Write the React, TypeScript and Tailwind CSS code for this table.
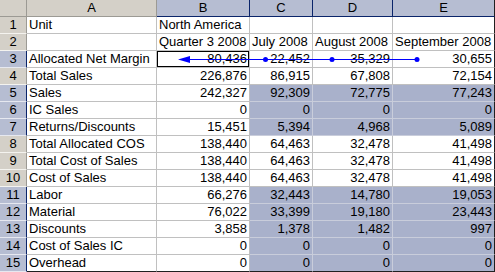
import React from "react";

type Row = { a: string; v: string[]; sel: boolean; text?: boolean };

const rows: Row[] = [
  { a: "Unit", v: ["North America", "", "", ""], sel: false, text: true },
  { a: "", v: ["Quarter 3 2008", "July 2008", "August 2008", "September 2008"], sel: false, text: true },
  { a: "Allocated Net Margin", v: ["80,436", "22,452", "35,329", "30,655"], sel: false },
  { a: "Total Sales", v: ["226,876", "86,915", "67,808", "72,154"], sel: false },
  { a: "Sales", v: ["242,327", "92,309", "72,775", "77,243"], sel: true },
  { a: "IC Sales", v: ["0", "0", "0", "0"], sel: true },
  { a: "Returns/Discounts", v: ["15,451", "5,394", "4,968", "5,089"], sel: true },
  { a: "Total Allocated COS", v: ["138,440", "64,463", "32,478", "41,498"], sel: false },
  { a: "Total Cost of Sales", v: ["138,440", "64,463", "32,478", "41,498"], sel: false },
  { a: "Cost of Sales", v: ["138,440", "64,463", "32,478", "41,498"], sel: false },
  { a: "Labor", v: ["66,276", "32,443", "14,780", "19,053"], sel: true },
  { a: "Material", v: ["76,022", "33,399", "19,180", "23,443"], sel: true },
  { a: "Discounts", v: ["3,858", "1,378", "1,482", "997"], sel: true },
  { a: "Cost of Sales IC", v: ["0", "0", "0", "0"], sel: true },
  { a: "Overhead", v: ["0", "0", "0", "0"], sel: true },
];

const widths = ["w-[130px]", "w-[93px]", "w-[63px]", "w-[80px]", "w-[102px]"];

export default function App() {
  return (
    <div
      className="relative w-[495px] h-[272px] overflow-hidden bg-white text-black text-[13px]"
      style={{ fontFamily: '"Liberation Sans", Arial, sans-serif' }}
    >
      {/* header row */}
      <div className="flex h-[17px]">
        <div className="w-[27px] h-[17px] bg-[#d4d0c8] border-r border-b border-[#9c9a94]" />
        {["A", "B", "C", "D", "E"].map((l, i) => (
          <div
            key={l}
            className={
              widths[i] +
              " h-[17px] flex items-center justify-center leading-[16px] border-r border-b " +
              (i === 0
                ? "bg-[#d4d0c8] border-[#9c9a94]"
                : "bg-[#b6bdd2] border-[#0a246a]") +
              (i === 4 ? " border-r-[#202020]" : "")
            }
          >
            {l}
          </div>
        ))}
      </div>
      {rows.map((r, ri) => {
        const n = ri + 1;
        const hdrSel = r.sel || n === 3;
        const last = ri === rows.length - 1;
        return (
          <div key={n} className="flex h-[17px]">
            <div
              className={
                "w-[27px] h-[17px] flex items-center justify-center leading-[16px] border-b border-r " +
                (hdrSel
                  ? "bg-[#b6bdd2] border-b-[#e6e8f0] border-r-[#0a246a]"
                  : "bg-[#d4d0c8] border-b-[#f4f3ef] border-r-[#9c9a94]") +
                (last ? " border-b-[#202020]" : "")
              }
            >
              {n}
            </div>
            {[r.a, ...r.v].map((val, ci) => {
              const cellSel = r.sel && ci >= 2;
              const isText = ci === 0 || r.text;
              const box = n === 3 && ci === 1;
              return (
                <div
                  key={ci}
                  className={
                    widths[ci] +
                    " h-[17px] flex items-end leading-[16px] whitespace-nowrap overflow-visible border-r border-b px-[2px] " +
                    (isText ? "justify-start " : "justify-end ") +
                    (cellSel ? "bg-[#a9b1cb] border-[#c9cddb]" : "border-[#c0c0c0]") +
                    (ci === 4 ? " border-r-[#202020]" : "") +
                    (last ? " border-b-[#202020]" : "") +
                    (box ? " shadow-[inset_0_0_0_1px_#000]" : "")
                  }
                >
                  <span className="pb-[0px]">{val}</span>
                </div>
              );
            })}
          </div>
        );
      })}
      {/* trace precedents arrow */}
      <svg
        className="absolute left-0 top-0 pointer-events-none"
        width={495}
        height={272}
      >
        <line x1={186} y1={59.5} x2={417} y2={59.5} stroke="#0000ff" strokeWidth={1} />
        <polygon points="178,59.5 190,56 190,63" fill="#0000ff" />
        <circle cx={265.5} cy={59.5} r={2.5} fill="#0000ff" />
        <circle cx={332} cy={59.5} r={2.5} fill="#0000ff" />
        <circle cx={417} cy={59.5} r={2.5} fill="#0000ff" />
      </svg>
    </div>
  );
}
